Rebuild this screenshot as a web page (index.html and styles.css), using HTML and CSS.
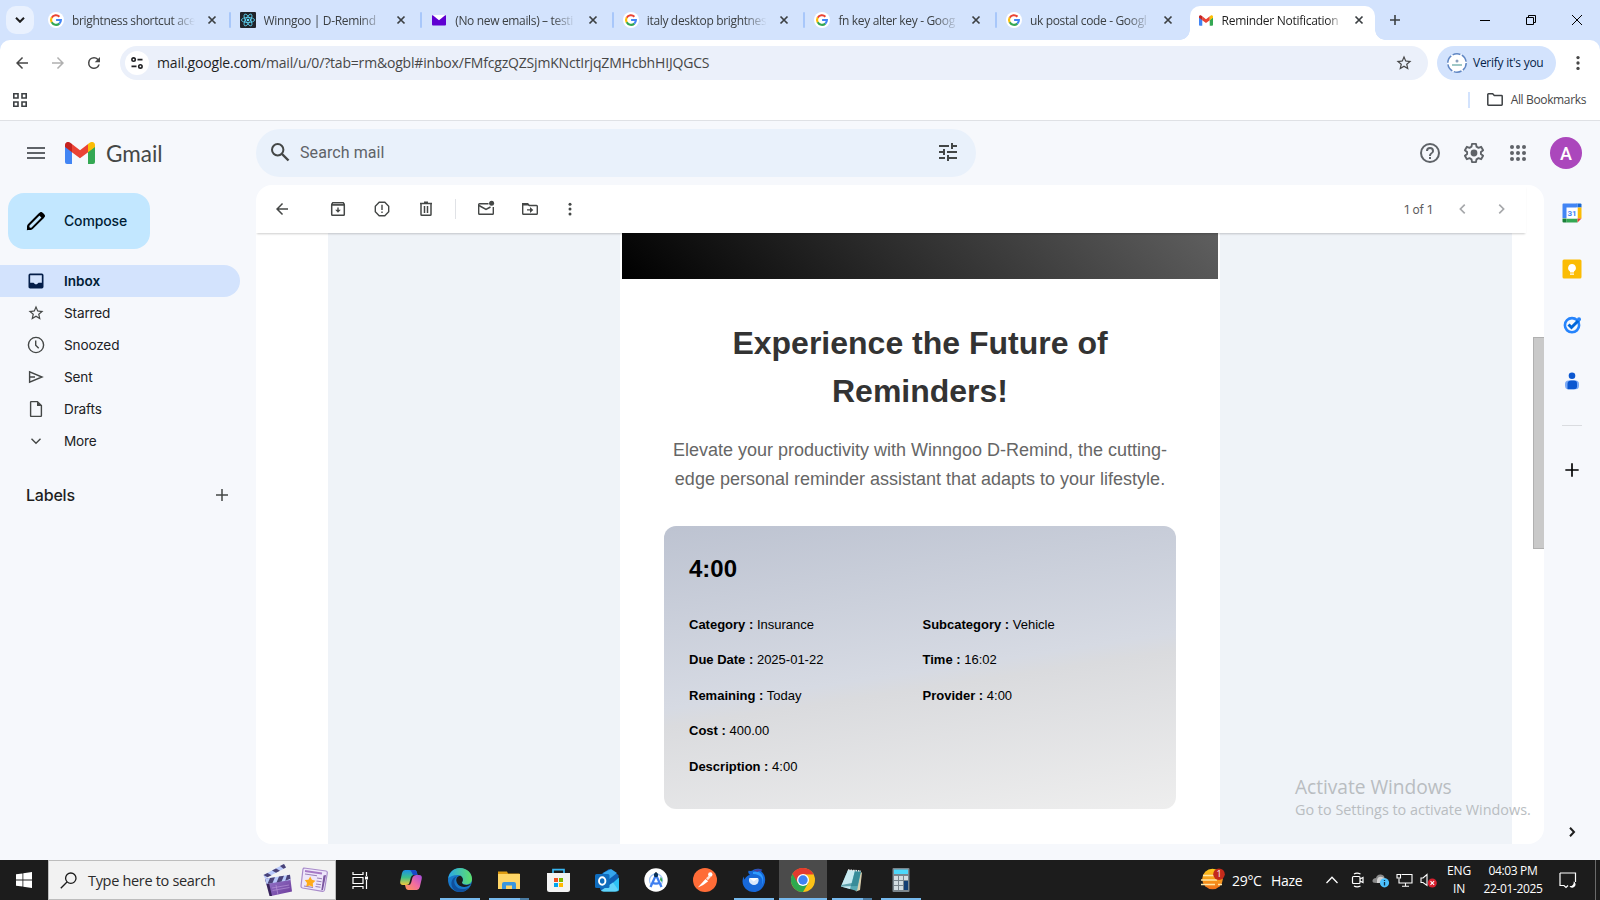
FILE: index.html
```html
<!DOCTYPE html>
<html lang="en">
<head>
<meta charset="utf-8">
<title>Reminder Notification - Gmail</title>
<link rel="stylesheet" href="styles.css">
</head>
<body>
<svg class="defs" width="0" height="0" aria-hidden="true">
  <symbol id="google" viewBox="0 0 16 16">
    <circle cx="8" cy="8" r="8" fill="#fff"/>
    <g fill="none" stroke-width="2.1">
      <path d="M11.4 4.7A4.9 4.9 0 0 0 3.7 5.7" stroke="#ea4335"/>
      <path d="M3.7 5.6a4.9 4.9 0 0 0 0 4.8" stroke="#fbbc05"/>
      <path d="M3.7 10.3a4.9 4.9 0 0 0 7.6 1.3" stroke="#34a853"/>
      <path d="M8.1 8h4.8c0 1.5-.6 2.800-1.600 3.700" stroke="#4285f4"/>
    </g>
  </symbol>
  <symbol id="x" viewBox="0 0 10 10"><path d="M1.500 1.500l7 7M8.500 1.500l-7 7" stroke="#3c4043" stroke-width="1.700" fill="none"/></symbol>
  <symbol id="gmail" viewBox="0 0 30 22">
    <path d="M0 4.500V20a2 2 0 0 0 2 2h5V9.500z" fill="#4285f4"/>
    <path d="M30 4.500V20a2 2 0 0 1-2 2h-5V9.500z" fill="#34a853"/>
    <path d="M6.900 2L15 8.200 23.100 2v8.200L15 16.200 6.900 10.200z" fill="#ea4335"/>
    <path d="M0 3c0-2.700 3.100-4 5.300-2.200L7 2.100v8.200L0 5z" fill="#c5221f"/>
    <path d="M30 3c0-2.700-3.100-4-5.300-2.200L23 2.100v8.200L30 5z" fill="#fbbc04"/>
  </symbol>
  <symbol id="star" viewBox="0 0 24 24"><path d="M22 9.240l-7.190-.620L12 2 9.190 8.630 2 9.240l5.460 4.730L5.820 21 12 17.270 18.180 21l-1.630-7.030L22 9.240zM12 15.400l-3.760 2.270 1-4.280-3.320-2.880 4.380-.380L12 6.100l1.710 4.040 4.380.380-3.320 2.880 1 4.280L12 15.400z"/></symbol>
  <symbol id="back" viewBox="0 0 24 24"><path d="M20 11H7.830l5.590-5.590L12 4l-8 8 8 8 1.410-1.410L7.830 13H20v-2z"/></symbol>
  <symbol id="kebab" viewBox="0 0 24 24"><circle cx="12" cy="5.500" r="2"/><circle cx="12" cy="12" r="2"/><circle cx="12" cy="18.500" r="2"/></symbol>
  <symbol id="plus" viewBox="0 0 24 24"><path d="M20 13h-7v7h-2v-7H4v-2h7V4h2v7h7z"/></symbol>
  <symbol id="chev" viewBox="0 0 24 24"><path d="M9.400 18L8 16.600l4.600-4.600L8 7.400 9.400 6l6 6z"/></symbol>
</svg>

<header class="browser">
  <div class="tabstrip">
    <div class="tabsearch"><svg width="10" height="6" viewBox="0 0 10 6"><path d="M1 .8l4 4 4-4" fill="none" stroke="#1f1f1f" stroke-width="2"/></svg></div>
    <div class="tab first"><svg class="fav"><use href="#google"/></svg><span class="title">brightness shortcut ace</span><svg class="x"><use href="#x"/></svg></div>
    <div class="tab"><svg class="fav" viewBox="0 0 16 16"><rect width="16" height="16" rx="1" fill="#20232a"/><g fill="none" stroke="#61dafb" stroke-width=".8"><ellipse cx="8" cy="8" rx="6.600" ry="2.500"/><ellipse cx="8" cy="8" rx="6.600" ry="2.500" transform="rotate(60 8 8)"/><ellipse cx="8" cy="8" rx="6.600" ry="2.500" transform="rotate(120 8 8)"/></g><circle cx="8" cy="8" r="1.300" fill="#61dafb"/></svg><span class="title">Winngoo | D-Remind</span><svg class="x"><use href="#x"/></svg></div>
    <div class="tab"><svg class="fav" viewBox="0 0 16 16"><rect x="1" y="3" width="14" height="10.500" rx="1" fill="#6001d2"/><path d="M1.500 3h13L8 8.200z" fill="#fff"/></svg><span class="title">(No new emails) – testi</span><svg class="x"><use href="#x"/></svg></div>
    <div class="tab"><svg class="fav"><use href="#google"/></svg><span class="title">italy desktop brightnes</span><svg class="x"><use href="#x"/></svg></div>
    <div class="tab"><svg class="fav"><use href="#google"/></svg><span class="title">fn key alter key - Goog</span><svg class="x"><use href="#x"/></svg></div>
    <div class="tab"><svg class="fav"><use href="#google"/></svg><span class="title">uk postal code - Googl</span><svg class="x"><use href="#x"/></svg></div>
    <div class="tab active"><svg class="fav gm"><use href="#gmail"/></svg><span class="title">Reminder Notification</span><svg class="x"><use href="#x"/></svg></div>
    <svg class="newtab" width="12" height="12" viewBox="0 0 12 12"><path d="M6 1v10M1 6h10" stroke="#3c4043" stroke-width="1.600"/></svg>
    <div class="winbtns">
      <svg width="10" height="10" viewBox="0 0 10 10"><path d="M0 5.500h10" stroke="#000"/></svg>
      <svg width="10" height="10" viewBox="0 0 10 10"><path d="M.5 2.500h7v7h-7zM2.500 2V.5h7v7H8" fill="none" stroke="#000"/></svg>
      <svg width="10" height="10" viewBox="0 0 10 10"><path d="M0 0l10 10M10 0L0 10" stroke="#000"/></svg>
    </div>
  </div>
  <div class="addressbar">
    <svg class="nav" viewBox="0 0 24 24"><use href="#back"/></svg>
    <svg class="nav fwd" viewBox="0 0 24 24"><use href="#back"/></svg>
    <svg class="nav" viewBox="0 0 24 24"><path d="M17.650 6.350A7.960 7.960 0 0 0 12 4a8 8 0 1 0 7.730 10h-2.080A6 6 0 1 1 12 6c1.660 0 3.140.690 4.220 1.780L13 11h7V4l-2.350 2.350z"/></svg>
    <div class="omnibox">
      <div class="site"><svg width="14" height="14" viewBox="0 0 14 14" fill="none" stroke="#202124" stroke-width="1.600"><circle cx="3.600" cy="3.600" r="1.700"/><path d="M7.500 3.600h5M1.500 10.400h5"/><circle cx="10.400" cy="10.400" r="1.700"/></svg></div>
      <div class="url"><b>mail.google.com</b>/mail/u/0/?tab=rm&amp;ogbl#inbox/FMfcgzQZSjmKNctIrjqZMHcbhHIJQGCS</div>
      <svg class="bstar" width="18" height="18"><use href="#star"/></svg>
    </div>
    <div class="verify"><svg width="20" height="20" viewBox="0 0 20 20"><circle cx="10" cy="10" r="9.800" fill="#fff"/><circle cx="10" cy="10" r="9.200" fill="none" stroke="#5f86c4" stroke-width="1.500" stroke-dasharray="8 1.630"/><circle cx="10" cy="8" r="1.500" fill="#8aa0bd"/><path d="M5 12h10" stroke="#7fb6b4" stroke-width="1.500"/></svg><span>Verify it's you</span></div>
    <svg class="bmenu" width="20" height="20"><use href="#kebab"/></svg>
  </div>
  <div class="bookmarks">
    <svg width="14" height="14" viewBox="0 0 14 14" fill="none" stroke="#3c4043" stroke-width="1.600"><path d="M.8.8h4.200v4.200H.8zM9 .8h4.200v4.200H9zM.8 9h4.200v4.200H.8zM9 9h4.200v4.200H9z"/></svg>
    <i class="bdiv"></i>
    <svg width="16" height="13" viewBox="0 0 16 13"><path d="M.8 1.500q0-.7.7-.7h4.200l1.600 1.700h7.200q.7 0 .7.700v8.300q0 .7-.7.700H1.500q-.7 0-.7-.7z" fill="none" stroke="#3c4043" stroke-width="1.500"/></svg>
    <span>All Bookmarks</span>
  </div>
</header>

<main class="gmail">
  <aside class="side">
    <div class="brand">
      <svg class="burger" width="18" height="12" viewBox="0 0 18 12"><path d="M0 1h18M0 6h18M0 11h18" stroke="#5f6368" stroke-width="2"/></svg>
      <svg class="glogo" width="30" height="22"><use href="#gmail"/></svg>
      <span>Gmail</span>
    </div>
    <div class="compose"><svg width="20" height="20" viewBox="0 0 20 20"><path d="M2 18l.6-4L13.800 2.800a1.700 1.700 0 0 1 2.400 0l1 1a1.700 1.700 0 0 1 0 2.400L6 17.400z" fill="none" stroke="#000" stroke-width="2"/><path d="M12.300 3.400l4.300 4.300 1.900-1.900q.8-1 0-1.900L16.100 1.500q-.9-.8-1.900 0zM1.100 18.900V14l4.900 4.900z"/></svg><span>Compose</span></div>
    <nav class="folders">
      <div class="on"><svg viewBox="0 0 24 24"><path d="M19 3H5a2 2 0 0 0-2 2v14c0 1.100.9 2 2 2h14a2 2 0 0 0 2-2V5a2 2 0 0 0-2-2zm0 11h-4l-2 2h-2l-2-2H5V5h14z"/></svg><span>Inbox</span></div>
      <div><svg viewBox="0 0 24 24"><use href="#star"/></svg><span>Starred</span></div>
      <div><svg viewBox="0 0 20 20"><circle cx="10" cy="10" r="7.600" fill="none" stroke="#444746" stroke-width="1.400"/><path d="M9.700 5.500v4.700l3 3" fill="none" stroke="#444746" stroke-width="1.400"/></svg><span>Snoozed</span></div>
      <div><svg viewBox="0 0 20 20"><path d="M3.600 4.900v10.200L16 10z" fill="none" stroke="#444746" stroke-width="1.400"/><path d="M3.500 10H9" stroke="#444746" stroke-width="1.500"/></svg><span>Sent</span></div>
      <div><svg viewBox="0 0 20 20"><path d="M4.600 3.200q0-.6.6-.6h6.200l4 4v10.200q0 .6-.6.600H5.200q-.6 0-.6-.6z" fill="none" stroke="#444746" stroke-width="1.400"/><path d="M11 2.500v4.500h4.500z" fill="#444746"/></svg><span>Drafts</span></div>
      <div><svg viewBox="0 0 20 20"><path d="M5.500 7.700l4.500 4.500 4.500-4.500" fill="none" stroke="#444746" stroke-width="1.400"/></svg><span>More</span></div>
    </nav>
    <div class="labels"><span>Labels</span><svg width="18" height="18" fill="#444746"><use href="#plus"/></svg></div>
  </aside>

  <section class="center">
    <div class="topbar">
      <div class="search">
        <svg class="mag" width="20" height="20" viewBox="0 0 20 20"><circle cx="7.700" cy="7.700" r="5.700" fill="none" stroke="#444746" stroke-width="2"/><path d="M12 12l6.500 6.500" stroke="#444746" stroke-width="2.400"/></svg>
        <span>Search mail</span>
        <svg class="tune" width="18" height="18" viewBox="0 0 18 18"><path d="M0 3h10M13 0v6M13 3h5M0 9h5M5 6v6M8 9h10M0 15h6M9 12v6M9 15h9" stroke="#444746" stroke-width="2"/></svg>
      </div>
      <div class="tools">
        <svg viewBox="0 0 24 24"><path d="M11 18h2v-2h-2v2zm1-16a10 10 0 1 0 0 20 10 10 0 0 0 0-20zm0 18a8 8 0 1 1 0-16 8 8 0 0 1 0 16zm0-14a4 4 0 0 0-4 4h2a2 2 0 1 1 4 0c0 2-3 1.750-3 5h2c0-2.250 3-2.500 3-5a4 4 0 0 0-4-4z"/></svg>
        <svg viewBox="0 0 24 24"><path d="M10 2.900h4l.5 2.800 2 1.100 2.600-1 2 3.400-2.200 1.800v2l2.200 1.800-2 3.400-2.600-1-2 1.100-.5 2.800h-4l-.5-2.800-2-1.100-2.600 1-2-3.400 2.200-1.800v-2L2.900 9.200l2-3.400 2.600 1 2-1.100z" fill="none" stroke="#5f6368" stroke-width="1.900" stroke-linejoin="round"/><circle cx="12" cy="12" r="3.400"/></svg>
        <svg viewBox="0 0 24 24"><g><circle cx="6" cy="6" r="2"/><circle cx="12" cy="6" r="2"/><circle cx="18" cy="6" r="2"/><circle cx="6" cy="12" r="2"/><circle cx="12" cy="12" r="2"/><circle cx="18" cy="12" r="2"/><circle cx="6" cy="18" r="2"/><circle cx="12" cy="18" r="2"/><circle cx="18" cy="18" r="2"/></g></svg>
        <div class="avatar">A</div>
      </div>
    </div>
    <div class="lower">
      <div class="panel">
        <div class="mailbar">
          <svg class="i1" viewBox="0 0 24 24"><use href="#back"/></svg>
          <svg viewBox="0 0 20 20"><path d="M3.700 6v9.500q0 .8.800.8h11q.8 0 .8-.8V6" fill="none" stroke="#444746" stroke-width="1.500"/><path d="M3 6.800L3 5l1.400-2h11.200L17 5v1.800z"/><path d="M5 4.600h10" stroke="#bbb" stroke-width=".9"/><path d="M9.300 8.500h1.400v2.300h2.100L10 13.800l-2.800-3h2.100z"/></svg>
          <svg viewBox="0 0 20 20"><path d="M7.200 3.300h5.600l3.900 3.900v5.600l-3.900 3.900H7.200l-3.900-3.900V7.200z" fill="none" stroke="#444746" stroke-width="1.400"/><path d="M9.300 5.800h1.400v5.200H9.300zM9.300 12.500h1.400v1.500H9.300z"/></svg>
          <svg viewBox="0 0 20 20"><path d="M5 5v10.500q0 .8.800.8h8.400q.8 0 .8-.8V5" fill="none" stroke="#444746" stroke-width="1.500"/><path d="M4 4.500h12M8 3.300h4" stroke="#444746" stroke-width="1.500"/><path d="M8.500 7v7M11.500 7v7" stroke="#444746" stroke-width="1.500"/></svg>
          <i class="mdiv"></i>
          <svg viewBox="0 0 20 20"><path d="M12.500 4.700H3.500q-.8 0-.8.8v9q0 .8.800.8h13q.8 0 .8-.8V8" fill="none" stroke="#444746" stroke-width="1.400"/><path d="M3 6.500l7 4 4.500-2.500" fill="none" stroke="#444746" stroke-width="1.500"/><circle cx="15.600" cy="4.200" r="2.500"/></svg>
          <svg viewBox="0 0 20 20"><path d="M2.700 4.800h5l1.600 1.700h7.200q.8 0 .8.800v7.200q0 .8-.8.800H3.500q-.8 0-.8-.8z" fill="none" stroke="#444746" stroke-width="1.400"/><path d="M2.500 4.500h5.300l1.800 2H2.500z"/><path d="M7 10.200h3V7.900l3.300 3-3.300 3v-2.300H7z"/></svg>
          <svg class="i7" viewBox="0 0 24 24"><use href="#kebab"/></svg>
          <span class="count">1 of 1</span>
          <svg class="pg left" viewBox="0 0 24 24"><use href="#chev"/></svg>
          <svg class="pg" viewBox="0 0 24 24"><use href="#chev"/></svg>
        </div>
        <div class="scroller">
          <div class="mail">
            <article class="letter">
              <div class="banner"></div>
              <div class="content">
                <h1>Experience the Future of Reminders!</h1>
                <p class="lead">Elevate your productivity with Winngoo D-Remind, the cutting-edge personal reminder assistant that adapts to your lifestyle.</p>
                <div class="card">
                  <h2>4:00</h2>
                  <div class="facts">
                    <div><b>Category :</b> Insurance</div><div><b>Subcategory :</b> Vehicle</div>
                    <div><b>Due Date :</b> 2025-01-22</div><div><b>Time :</b> 16:02</div>
                    <div><b>Remaining :</b> Today</div><div><b>Provider :</b> 4:00</div>
                    <div><b>Cost :</b> 400.00</div><div></div>
                    <div><b>Description :</b> 4:00</div><div></div>
                  </div>
                </div>
              </div>
            </article>
          </div>
          <div class="track"><div class="thumb"></div></div>
        </div>
      </div>
      <aside class="rail">
        <svg width="20" height="20" viewBox="0 0 20 20"><path d="M1.500.5H14.500V5H5v10H.5V1.500q0-1 1-1z" fill="#4285f4"/><path d="M15.500.5h3q1 0 1 1V4.500h-4z" fill="#1967d2"/><path d="M14 .5h1.600v4H14z" fill="#4285f4"/><path d="M15.500 4.500h4v11h-4z" fill="#fbbc04"/><path d="M4.500 15.500h11v4h-11z" fill="#34a853"/><path d="M.5 15.500h4v4h-3q-1 0-1-1z" fill="#188038"/><path d="M15.500 15.500h4l-4 4z" fill="#ea4335"/><path d="M4.500 4.500h11v11h-11z" fill="#fff"/><text x="10" y="13" text-anchor="middle" class="cal">31</text></svg>
        <svg width="20" height="20" viewBox="0 0 20 20"><rect x=".5" y=".5" width="19" height="19" rx="1.500" fill="#fbbc04"/><path d="M10 5a4 4 0 0 0-2 7.400v1.200h4v-1.200A4 4 0 0 0 10 5zM8 14.500h4v1.200H8z" fill="#fff"/></svg>
        <svg width="20" height="20" viewBox="0 0 20 20"><circle cx="10" cy="10.200" r="7.100" fill="none" stroke="#2684fc" stroke-width="2.600"/><path d="M6.500 9.500l3 3 7.700-7.700" fill="none" stroke="#0066da" stroke-width="3"/><circle cx="17" cy="4.300" r="2" fill="#2684fc"/></svg>
        <svg width="20" height="20" viewBox="0 0 20 20"><circle cx="10" cy="4.800" r="3.300" fill="#0b57d0"/><rect x="3" y="9.500" width="14" height="8.700" rx="3.500" fill="#7baaf7"/><path d="M5.500 18.200v-5.200q0-3.500 3.500-3.500h3q3 0 3 3v2.700q0 3-3 3z" fill="#0b57d0"/></svg>
        <i></i>
        <svg class="rplus" width="20" height="20"><use href="#plus"/></svg>
        <svg class="rchev" width="20" height="20" viewBox="0 0 20 20"><path d="M8 5.800l4 4.200-4 4.200" fill="none" stroke="#1f1f1f" stroke-width="2"/></svg>
      </aside>
    </div>
  </section>
  <div class="activate"><strong>Activate Windows</strong><span>Go to Settings to activate Windows.</span></div>
</main>

<footer class="taskbar">
  <div class="start"><svg width="16" height="16" viewBox="0 0 16 16" fill="#fff"><path d="M0 2.300L6.500 1.400v6.200H0zM7.300 1.300L16 0v7.600H7.300zM0 8.400h6.500v6.200L0 13.700zM7.300 8.400H16V16l-8.700-1.300z"/></svg></div>
  <div class="tsearch">
    <svg width="17" height="17" viewBox="0 0 17 17" fill="none" stroke="#1b1b1b" stroke-width="1.300"><circle cx="10.800" cy="6.200" r="5.200"/><path d="M7 10L.8 16.200"/></svg>
    <span>Type here to search</span>
    <svg class="clap" width="32" height="34" viewBox="0 0 32 34"><defs><linearGradient id="cg" x1="0" y1="0" x2="1" y2="1"><stop offset="0" stop-color="#9a7fd0"/><stop offset="1" stop-color="#6c3a9a"/></linearGradient></defs><path d="M3 16l25-3.500 2 16L9 33z" fill="url(#cg)"/><path d="M3 16l3-.4L10 33H7.500z" fill="#38235c"/><path d="M3 15.800l25-4 .4 5.200L4.500 21z" fill="#b9c9fa"/><path d="M8 15l5-.8-2.500 5.800-5 .8zM17 13.600l5-.8-2.500 5.800-5 .8zM25 12.300l3-.5.3 4-5 2z" fill="#4a4378"/><path d="M1.500 12L22 1l2 3.500L3 15.600z" fill="#b9c9fa"/><path d="M1.500 12l4-2.100 4 2.300-4 2.100zM10 7.500l4-2.100 4 2.300-4 2.100zM18 3l4-2 2 3.400-2.500 1.300z" fill="#4a4378"/><path d="M10 25l17-3M10.500 27.500l17-3M14 22l2 10" stroke="#b592d6" stroke-width=".7"/></svg>
    <svg class="news" width="28" height="26" viewBox="0 0 28 26"><path d="M4 1l22 3q1.500.3 1.300 2L24.500 23q-.3 1.500-2 1.300L2.500 21Q.8 20.600 1 19L3 2z" fill="#eee6fa" stroke="#a98ccb" stroke-width="1.200"/><path d="M23.500 8.500l2.500-.5-3 15-1.700.3z" fill="#7b569f"/><path d="M5 4l17 2.500" stroke="#a678c5" stroke-width="1.800"/><path d="M5 7l12 1.700M17 11l5 .8M16.500 14l5 .8M16 17l5 .8M15.500 19.500l5 .8M4 19l9 1.500" stroke="#9a80b8" stroke-width="1.100"/><path d="M10.200 9.500l1.700 3.300 3.600.9-2.700 2.500.3 3.800-3.400-1.600-3.500 1.200.8-3.600L4.800 13l3.600-.2z" fill="#ffab1a"/></svg>
  </div>
  <div class="apps">
    <div class="view"><svg width="17" height="17" viewBox="0 0 17 17" fill="none" stroke="#fff" stroke-width="1.200"><path d="M1 0v2.500h10V0M1 17v-2.500h10V17M1 5.500h10v6H1zM14.500 0v4M14.500 8v9"/><path d="M13 6h3" stroke-width="3"/></svg></div>
    <div><svg width="24" height="24" viewBox="0 0 24 24"><defs><linearGradient id="c1" x1="0" y1="0" x2="0" y2="1"><stop offset="0" stop-color="#1a8fe8"/><stop offset=".5" stop-color="#3cc08a"/><stop offset="1" stop-color="#f4c93b"/></linearGradient><linearGradient id="c2" x1="1" y1="0" x2="0" y2="1"><stop offset="0" stop-color="#a34be0"/><stop offset=".5" stop-color="#f26ca0"/><stop offset="1" stop-color="#ff9a52"/></linearGradient></defs><path d="M6 2h9q2.500 0 3 3l.5 2h-4q-2 0-2.700 2.500l-1.300 5Q10 17 7 17H4q-3.500 0-2.700-4L3 5q.8-3 3-3z" fill="url(#c1)"/><path d="M10 2h5q2.500 0 3 3l.5 2H14L12.500 4Q12 2 10 2z" fill="#1949c9"/><path d="M18 22H9.500q-2.500 0-3-3L6 17h3.500q2 0 2.700-2.500l1.300-5Q14.500 7 17 7h3q3.500 0 2.700 4l-1.900 8q-.7 3-2.800 3z" fill="url(#c2)"/></svg></div>
    <div class="run"><svg width="24" height="24" viewBox="0 0 24 24"><defs><linearGradient id="e1" x1="0" y1="0" x2="1" y2="0"><stop offset="0" stop-color="#2aa8e8"/><stop offset="1" stop-color="#5fe06a"/></linearGradient></defs><circle cx="12" cy="12" r="12" fill="#1877c9"/><path d="M.3 10C1.500 4 6 0 12 0c7 0 12 5 12 11 0 4-3 5.500-6 5.500-2.500 0-4-1-4-2 0-.8.900-1 .9-3 0-2.500-2.400-4.500-5.400-4.500C5.500 7 2 8.500.3 10z" fill="url(#e1)"/><path d="M9 8.500c-3 2-3.500 6-1.500 9 2.500 4 8 4.500 13.500 2C18.500 22.500 15.500 24 12 24 5 24 2 17 4 12.500 5 10 7 8.700 9 8.500z" fill="#10509c"/><path d="M14.900 11.500c0-1.500-1-3-2.500-3.800C9 8 7.800 11 8.500 13.500c1 4 5.500 6.500 10.500 5l3.500-1.700c.3-.5 0-.8-.5-.6-4 1.800-8 .3-8-1.700 0-.8.900-1 .9-3z" fill="#1b1b1b"/></svg></div>
    <div class="run multi"><svg width="24" height="24" viewBox="0 0 24 24"><path d="M1 3.500h9l1 2h11.500v4H1z" fill="#e09d12"/><path d="M1 6h22v15H1z" fill="#ffd667"/><path d="M5 21v-5q0-2 2-2h10q2 0 2 2v5h-4v-3.500H9V21z" fill="#3a96dd"/></svg></div>
    <div><svg width="24" height="24" viewBox="0 0 24 24"><path d="M7 6V1.700h11V6" fill="none" stroke="#38b6f1" stroke-width="1.700"/><path d="M1 5h23v16.500q0 2.500-2.500 2.500h-18Q1 24 1 21.500z" fill="#f3f3f3"/><path d="M8 10h4v4H8z" fill="#f25022"/><path d="M13 10h4v4h-4z" fill="#7fba00"/><path d="M8 15h4v4H8z" fill="#00a4ef"/><path d="M13 15h4v4h-4z" fill="#ffb900"/></svg></div>
    <div><svg width="24" height="24" viewBox="0 0 24 24"><path d="M5 7l9-6 9.500 6v14q0 2-2 2H8q-3 0-3-3z" fill="#0f5fb5"/><path d="M8 5l8-4 6 4-9 7z" fill="#35a6ee"/><path d="M24 9.500V21q0 2.500-2.500 2.500H8z" fill="#2ec2f5"/><path d="M6 22.500l12-8 5 7q-.5 2-3 2H8q-1.500 0-2-1z" fill="#62d4fa"/><rect x="0" y="6" width="14.500" height="14" rx="1.500" fill="#0f6cbd"/><ellipse cx="7.200" cy="13" rx="3.200" ry="3.700" fill="none" stroke="#fff" stroke-width="1.900"/></svg></div>
    <div><svg width="24" height="24" viewBox="0 0 24 24"><circle cx="12" cy="12" r="11.700" fill="#fff"/><path d="M7.500 17A6.500 6.500 0 1 1 16.500 17" fill="none" stroke="#9fc3f7" stroke-width="1.200"/><path d="M6.500 19L12 7l5.500 12M8.200 14.500q3.800 2.400 7.600 0" fill="none" stroke="#3f7ff0" stroke-width="2.300"/><path d="M11.300 4h1.400v2h-1.400z" fill="#444"/><circle cx="12" cy="7" r="2.200" fill="#0a3158"/><path d="M16.500 9q2.500 2 1.500 5l-2-2z" fill="#34a853"/></svg></div>
    <div><svg width="24" height="24" viewBox="0 0 24 24"><circle cx="12" cy="12" r="12" fill="#ff6c37"/><path d="M4.800 19.500L12.500 11l2.700 2.300-5 3.700z" fill="#fff"/><path d="M13 10.300l3-2.800 1.600 1.800-2.700 3z" fill="#ffe3d8"/><circle cx="17.300" cy="6.500" r="2.200" fill="#fff"/></svg></div>
    <div class="run"><svg width="24" height="24" viewBox="0 0 24 24"><path d="M12 1.500c3-1.500 7-.5 8.500.5q-2 0-2.500.5c5 3 6.500 9 4 14.500C20 21.500 16 24 12 24 5 24 .5 19 .5 13q0-3 1.500-4.500Q2 11 2.500 11.500 5 7 8 7q-3-3-1-4.500 1.500 1.500 5-1z" fill="#1768d8"/><path d="M11 4q6-2 9 3t-1 12q4-9-3-12-2-1-5-1z" fill="#2e9bff"/><path d="M7.500 10h8.500q1.500 2.500-.5 5.500Q12 18.500 8.500 15.500q-2.500-2.500-1-5.500z" fill="#dbe9fb"/><path d="M7.500 10l4.200 3.500L16 10z" fill="#fff"/><path d="M11.500 2.500q5-2.500 9 0-4 0-5 1.500z" fill="#4b3f9a"/></svg></div>
    <div class="run here"><svg width="24" height="24" viewBox="0 0 24 24"><circle cx="12" cy="12" r="12" fill="#fbc116"/><path d="M12 12L1.600 6A12 12 0 0 1 22.400 6.200H12z" fill="#e33b2e"/><path d="M12 12L1.600 6A12 12 0 0 0 12 24l5.200-9z" fill="#2da94f"/><path d="M1.600 6A12 12 0 0 1 22.400 6.300H12L6.800 15z" fill="#e33b2e"/><circle cx="12" cy="12" r="6" fill="#fff"/><circle cx="12" cy="12" r="4.700" fill="#3e82f1"/></svg></div>
    <div class="run multi"><svg width="24" height="24" viewBox="0 0 24 24"><path d="M8 3l14 1.500L20 22l-4 1.500z" fill="#d8cfae"/><path d="M8 2l13 1-4 20-16-4.500z" fill="#58aab5"/><path d="M8 2l7 .5L10 21 1 18.500z" fill="#c9eaf0"/><path d="M15 2.500l6 .5-3.500 15L1 18.500l.5-1.500L12 15z" fill="#287c8b" opacity=".65"/><path d="M8 2l13 1" stroke="#e8e8e8" stroke-width="1.500" stroke-dasharray="1.500 1"/></svg></div>
    <div class="run"><svg width="24" height="24" viewBox="0 0 24 24"><rect x="3.500" width="17" height="24" rx="1" fill="#7a858d"/><path d="M5 1.500h14v4.500H5z" fill="#4dd7fa"/><path d="M5 8h4v4H5zM10 8h4v4h-4zM15 8h4v4h-4zM5 13h4v4H5zM10 13h4v4h-4zM5 18h4v4H5zM10 18h4v4h-4z" fill="#d3dde2"/><path d="M15 13h4v9h-4z" fill="#133f75"/></svg></div>
  </div>
  <div class="tray">
    <svg class="sun" width="26" height="24" viewBox="0 0 26 24"><defs><linearGradient id="sg" x1="0" y1="0" x2="0" y2="1"><stop offset="0" stop-color="#ffca1d"/><stop offset="1" stop-color="#f0701a"/></linearGradient></defs><circle cx="12.500" cy="11" r="10.300" fill="url(#sg)"/><path d="M3 7.500h13M1 12h16M1 16.500h14M18 16.500h4" stroke="#ffe7a5" stroke-width="1.500"/><circle cx="19" cy="6.200" r="5.800" fill="#c42b1c"/><text x="19" y="9.400" text-anchor="middle" class="sunb">1</text></svg>
    <span class="wx">29°C</span><span class="wx hz">Haze</span>
    <svg class="t1" width="12" height="8" viewBox="0 0 12 8"><path d="M.5 7L6 1.300 11.500 7" fill="none" stroke="#fff" stroke-width="1.300"/></svg>
    <svg class="t2" width="14" height="16" viewBox="0 0 14 16" fill="none" stroke="#fff" stroke-width="1.200"><rect x="1.500" y="4.500" width="7.500" height="7" rx="1"/><path d="M9 7l3-1.500v5L9 9M3 2q3-1.800 6.500 0M3 14q3 1.800 6.500 0"/></svg>
    <svg class="t3" width="18" height="15" viewBox="0 0 18 15"><path d="M4 10Q0 10 .5 7.500 1 5 4 5q1-4 5-3.500 3.500.5 3.500 3.500 3 .5 3 3t-3 2z" fill="#8a8a8a"/><path d="M5 7q1-4 5-3 3 .5 3 3v3H5z" fill="#d2d2d2"/><circle cx="12.500" cy="9.800" r="4.600" fill="#4cc2ff"/><path d="M12.500 9v3.500M12.500 6.900v1.200" stroke="#10324a" stroke-width="1.300"/></svg>
    <svg class="t4" width="17" height="14" viewBox="0 0 17 14" fill="none" stroke="#fff" stroke-width="1.100"><path d="M5.500 1.500h10.500v8.500H3V5.500M9.500 10v3M6 13.300h7"/><path d="M1 1.500h3.500v3.500H1z"/></svg>
    <svg class="t5" width="17" height="15" viewBox="0 0 17 15"><path d="M1 5h2l4-3.500v11L3 9.500H1z" fill="none" stroke="#fff" stroke-width="1.100"/><circle cx="12.300" cy="10" r="4.500" fill="#d8202f"/><path d="M10.500 8.200l3.600 3.600M14.100 8.200l-3.600 3.600" stroke="#fff" stroke-width="1.100"/></svg>
    <div class="lang">ENG<br>IN</div>
    <div class="clock">04:03 PM<br>22-01-2025</div>
    <svg class="t6" width="18" height="17" viewBox="0 0 18 17"><path d="M1 1h15.500v9M9 13.500l-2 2-2-2H1V1" fill="none" stroke="#fff" stroke-width="1.200"/><path d="M14.500 9.500a3.200 3.200 0 1 1-4 4.500 3.500 3.500 0 0 0 4-4.500z" fill="#fff"/></svg>
    <i></i>
  </div>
</footer>
</body>
</html>
```

FILE: styles.css
```css
* { box-sizing: border-box; }
body { margin: 0; width: 1600px; height: 900px; overflow: hidden; display: flex; flex-direction: column; font-family: "Open Sans", "Noto Sans", sans-serif; background: #f6f8fc; }
svg { display: block; flex: none; }
.defs { position: absolute; }

/* Browser chrome */
.browser { height: 121px; background: #d3e3fd; border-bottom: 1px solid #dfe1e5; flex: none; }
.tabstrip { height: 40px; display: flex; align-items: flex-start; }
.tabsearch { width: 28px; height: 28px; margin: 6px 5px 0 6px; border-radius: 10px; background: #e9f1fe; display: grid; place-items: center; }
.tab { width: 191.6px; height: 28px; margin-top: 6px; padding: 0 16px 0 9px; display: flex; align-items: center; position: relative; }
.tab::before { content: ""; position: absolute; left: -2px; top: 6px; width: 2px; height: 16px; border-radius: 1px; background: #a8c7fa; }
.tab.first::before, .tab.active::before { display: none; }
.fav { width: 16px; height: 16px; margin-right: 8px; }
.gm { width: 14px; height: 11px; margin: 0 9px 0 0; }
.title { flex: 1; font-size: 12px; letter-spacing: -.34px; color: #3c4043; white-space: nowrap; -webkit-mask-image: linear-gradient(90deg, #000 calc(100% - 24px), transparent); }
.x { width: 10px; height: 10px; margin-left: 12px; }
.tab.active { width: 185px; height: 34px; margin-left: 1px; padding: 0 11px 6px 9px; background: #fff; border-radius: 10px 10px 0 0; }
.tab.active .title { color: #1f1f1f; letter-spacing: -.28px; }
.tab.active .title { -webkit-mask-image: linear-gradient(90deg, #000 calc(100% - 14px), transparent); }
.tab.active::after { content: ""; position: absolute; left: -10px; right: -10px; bottom: 0; height: 10px; background: radial-gradient(circle at 0 0, transparent 9.500px, #fff 10px) left / 10px 10px no-repeat, radial-gradient(circle at 100% 0, transparent 9.500px, #fff 10px) right / 10px 10px no-repeat; }
.newtab { margin: 14px 0 0 14px; }
.winbtns { margin: 15px 18px 0 auto; display: flex; gap: 36px; }
.addressbar { height: 46px; padding: 6px 0; background: #fff; border-radius: 10px 10px 0 0; display: flex; align-items: center; }
.nav { width: 18px; height: 18px; margin-left: 13px; margin-right: 5px; fill: #474747; }
.fwd { transform: scaleX(-1); fill: #b0b0b0; }
.nav:nth-child(3) { margin-right: 17px; }
.omnibox { width: 1308px; height: 34px; border-radius: 17px; background: #ebf0fa; display: flex; align-items: center; padding: 0 15px 0 5px; }
.site { width: 24px; height: 24px; border-radius: 50%; background: #fff; display: grid; place-items: center; }
.url { margin-left: 8px; padding-bottom: 1px; font-size: 14px; letter-spacing: -.18px; color: #474747; white-space: nowrap; }
.url b { font-weight: 400; color: #1f1f1f; }
.bstar { margin-left: auto; fill: #474747; }
.verify { width: 119px; height: 34px; margin-left: 9px; border-radius: 17px; background: #d3e3fd; display: flex; align-items: center; gap: 6px; padding: 0 0 1px 10px; font-size: 12px; letter-spacing: -.26px; color: #041e49; white-space: nowrap; }
.bmenu { margin-left: 12px; fill: #474747; }
.bookmarks { height: 34px; padding: 0 14px 7px 13px; background: #fff; display: flex; align-items: center; font-size: 12px; letter-spacing: -.36px; color: #474747; }
.bdiv { width: 2px; height: 16px; margin: 0 17px 0 auto; background: #d3e3fd; }
.bookmarks span { margin-left: 8px; }

/* Gmail shell */
.gmail { height: 739px; flex: none; display: flex; position: relative; background: #f6f8fc; font-family: Inter, Roboto, sans-serif; }
.side { width: 256px; flex: none; }
.brand { height: 72px; display: flex; align-items: center; padding: 0 0 8px 27px; }
.glogo { margin-left: 20px; }
.brand span { margin: 2px 0 0 11px; font: 22.500px/32px Lato, sans-serif; color: #444746; }
.compose { width: 142px; height: 56px; margin-left: 8px; border-radius: 16px; background: #c2e7ff; display: flex; align-items: center; padding-left: 18px; font-size: 14px; letter-spacing: -.15px; font-weight: 500; color: #001d35; }
.compose span { margin: -1px 0 0 18px; }
.folders { margin-top: 16px; }
.folders div { width: 240px; height: 32px; display: flex; align-items: center; padding-left: 26px; font-size: 13.600px; letter-spacing: -.16px; color: #202124; }
.folders svg { width: 20px; height: 20px; fill: #444746; margin-right: 18px; }
.folders .on { background: #d3e3fd; border-radius: 0 16px 16px 0; font-weight: 600; letter-spacing: 0; color: #001d35; }
.folders .on svg { fill: #041e49; }
.folders svg:has(use) { width: 18px; height: 18px; margin: 0 19px 0 1px; }
.labels { display: flex; align-items: center; justify-content: space-between; margin: 28px 25px 0 26px; height: 20px; font-size: 16px; font-weight: 500; letter-spacing: -.2px; color: #1f1f1f; }
.center { flex: 1; display: flex; flex-direction: column; }
.topbar { height: 64px; padding-top: 8px; display: flex; }
.search { width: 720px; height: 48px; border-radius: 24px; background: #e9f1fb; display: flex; align-items: center; padding: 0 19px 2px 14px; font: 16px Roboto, sans-serif; letter-spacing: .08px; color: #5f6368; }
.mag { margin-right: 10px; }
.tune { margin-left: auto; }
.tools { margin-left: auto; height: 48px; display: flex; align-items: center; padding-right: 18px; }
.tools svg { width: 24px; height: 24px; margin-right: 20px; fill: #5f6368; }
.tools .avatar { width: 32px; height: 32px; border-radius: 50%; background: #ab47bc; color: #fff; font: 500 18px/34px Roboto, sans-serif; text-align: center; }
.lower { display: flex; height: 659px; }
.panel { width: 1288px; height: 659px; background: #fff; border-radius: 16px; overflow: hidden; }
.mailbar { height: 48px; width: 1270px; display: flex; align-items: center; padding-left: 17px; box-shadow: 0 2px 2px -1px rgba(0,0,0,.2); position: relative; }
.mailbar svg { width: 20px; height: 20px; fill: #444746; margin-right: 24px; }
.mailbar .i1 { width: 18px; height: 18px; margin-right: 37px; }
.mailbar svg:nth-child(4) { margin-right: 19px; }
.mdiv { width: 1px; height: 20px; margin-right: 20px; background: #e0e2e6; }
.mailbar svg:nth-child(7) { margin-right: 21px; }
.mailbar .i7 { width: 18px; height: 18px; }
.count { margin: 0 20px 0 auto; font-size: 12px; letter-spacing: -.25px; word-spacing: .5px; color: #5e5e5e; }
.mailbar .pg { width: 20px; height: 20px; margin: 0 14px 0 0; fill: #a6a8ab; }
.mailbar .left { transform: scaleX(-1); margin-right: 20px; }
.scroller { height: 611px; display: flex; }
.mail { width: 1184px; margin-left: 72px; background: #eff3f8; display: flex; justify-content: center; }
.track { width: 11px; margin-left: 21px; padding-top: 104px; }
.thumb { height: 212px; background: #c9c9c9; border: 1px solid #b0b0b0; border-right: 0; }

/* Mail body */
.letter { width: 600px; padding: 0 2px; background: #fff; font-family: "Liberation Sans", Arial, sans-serif; }
.banner { height: 46px; background: linear-gradient(45deg, #000, #5f5f5f); }
.content { padding: 40px 42px 0; }
h1 { margin: 0; font-size: 32px; line-height: 48px; text-align: center; color: #333; }
.lead { margin: 21px -4px 0; font-size: 18px; line-height: 28.800px; text-align: center; color: #666; }
.card { height: 283px; margin-top: 32px; padding: 25px 24px 0; border-radius: 12px; background: linear-gradient(171.500deg, #bdc3d1 0%, #d6dae3 51%, #dadbde 56%, #eeeeee 100%); color: #000; }
.card h2 { margin: 0; font-size: 24px; line-height: 36px; padding-left: 1px; }
.facts { display: grid; grid-template-columns: 233.500px 1fr; grid-auto-rows: 35.500px; margin: 20px 0 0 1px; font-size: 13px; line-height: 35.500px; white-space: nowrap; }
.rail { width: 56px; display: flex; flex-direction: column; align-items: center; padding-top: 18px; }
.rail svg + svg { margin-top: 36px; }
.rail i { width: 20px; height: 1px; margin: 34px 0 34px; background: #dadce0; }
.rail .rchev { margin: auto 0 2px; }
.cal { font: 700 8px Roboto, sans-serif; fill: #4285f4; }

.activate { position: absolute; left: 1295px; top: 652px; font-family: "Open Sans", sans-serif; color: #b9bdc1; white-space: nowrap; }
.activate strong { display: block; font-weight: 400; font-size: 19.200px; line-height: 28px; letter-spacing: -.05px; }
.activate span { display: block; font-size: 14.400px; line-height: 18px; }

/* Taskbar */
.taskbar { height: 40px; flex: none; background: #1c1c1c; display: flex; }
.start { width: 48px; display: grid; place-items: center; }
.tsearch { width: 288px; background: #f2f2f2; border: 1px solid #bdbdbd; display: flex; align-items: center; padding-left: 11px; font-size: 14.500px; letter-spacing: -.32px; color: #2b2b2b; white-space: nowrap; }
.tsearch span { width: 185px; padding-left: 11px; margin-right: 0; }
.news { margin-left: 6px; }
.apps { display: flex; gap: 1px; margin-left: 2px; }
.apps div { width: 48px; height: 40px; display: grid; place-items: center; position: relative; }
.apps .view { padding-right: 3px; }
.apps .run::after { content: ""; position: absolute; left: 4px; bottom: 0; width: 40px; height: 2px; background: #76b9ed; }
.apps .here { background: #4b4b4b; }
.apps .here::after { left: 0; width: 48px; }
.apps .multi::after { background: linear-gradient(90deg, #76b9ed 31px, #4a7ba2 31px); }
.tray { margin-left: auto; display: flex; align-items: center; color: #fff; font-size: 12px; white-space: nowrap; }
.wx { margin-left: 6px; font-size: 14px; letter-spacing: -.3px; width: 31px; }
.wx.hz { margin-left: 8px; width: 32px; }
.sunb { font: 9px "Open Sans", sans-serif; fill: #fff; }
.t1 { margin-left: 23px; }
.t2 { margin-left: 13px; }
.t3 { margin-left: 7px; }
.t4 { margin-left: 6px; }
.t5 { margin-left: 7px; }
.lang { width: 26px; margin-left: 9px; line-height: 18px; font-size: 12px; letter-spacing: -.2px; text-align: center; }
.clock { width: 60px; margin-left: 11px; line-height: 18px; font-size: 12px; letter-spacing: -.36px; text-align: center; }
.t6 { margin-left: 16px; }
.tray i { width: 1px; height: 40px; margin: 0 4px 0 18px; background: #6a6a6a; }
```
